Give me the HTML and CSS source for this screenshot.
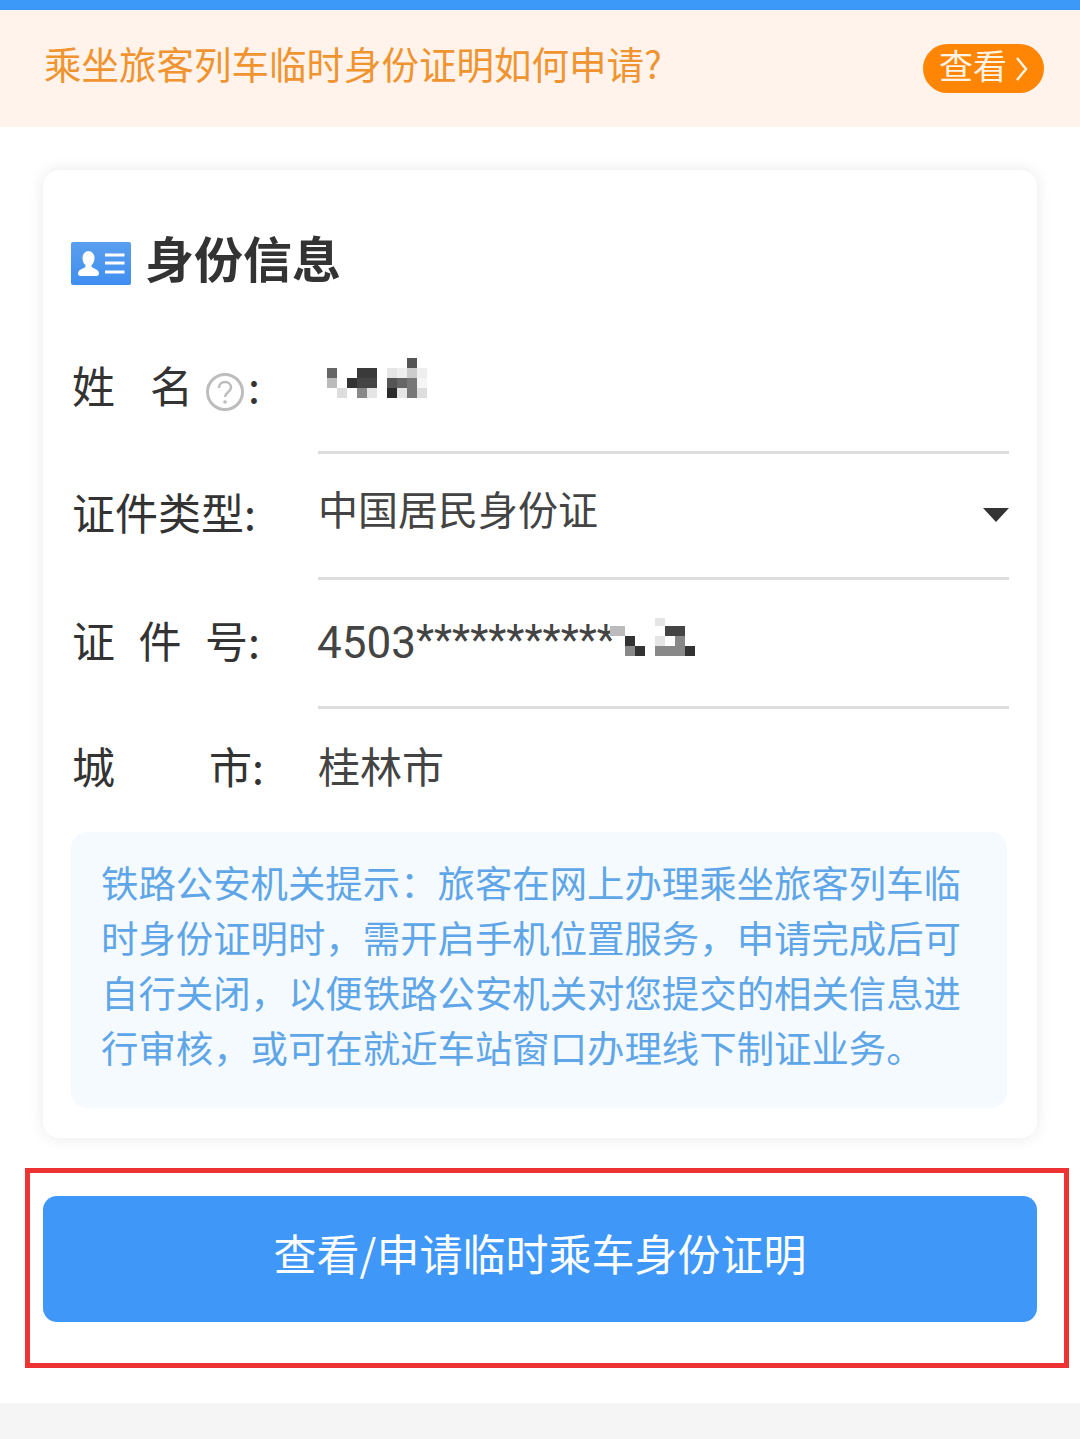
FILE: index.html
```html
<!DOCTYPE html>
<html lang="zh-CN">
<head>
    <meta charset="UTF-8">
    <meta name="viewport" content="width=device-width, initial-scale=1.0">
    <title>身份信息</title>
    <link rel="stylesheet" href="styles.css">
</head>
<body>
    <div class="top-bar"></div>

    <!-- 顶部提示 -->
    <div class="notice">
        <span class="notice-text">乘坐旅客列车临时身份证明如何申请?</span>
        <span class="notice-btn">查看
            <svg class="notice-arrow" viewBox="0 0 14 26"><path d="M2 2l9 11-9 11"/></svg>
        </span>
    </div>

    <!-- 身份信息卡片 -->
    <div class="card">
        <div class="card-title">
            <svg class="id-icon" viewBox="0 0 60 43">
                <defs>
                    <linearGradient id="idFill" x1="0" y1="0" x2="0" y2="1">
                        <stop offset="0" stop-color="#5a9fee"/>
                        <stop offset="1" stop-color="#3f8ef0"/>
                    </linearGradient>
                </defs>
                <rect width="60" height="43" rx="2" fill="url(#idFill)"/>
                <path d="M17 9c4 0 6.500 3 6.500 7 0 3-1.200 5.500-2.800 7-.6 1.500 0 2.500 2 3.300 3 1.200 5.300 2.500 5.300 5.200 0 1.500-1 2.500-2.500 2.500h-16c-1.500 0-2.500-1-2.500-2.500 0-2.700 2.300-4 5.300-5.200 2-.8 2.600-1.800 2-3.300-1.600-1.500-2.800-4-2.800-7 0-4 2.500-7 6.500-7z" fill="#fff"/>
                <path d="M34 11.500h19.500v3H34zM34 19.500h19.500v3H34zM34 28.500h19.500v3H34z" fill="#fff"/>
            </svg>
            <span>身份信息</span>
        </div>

        <div class="row row-name">
            <div class="label">
                <span>姓</span><span class="gap-name">名</span>
                <svg class="help-icon" viewBox="0 0 40 40">
                    <circle cx="20" cy="20" r="17.500" fill="none" stroke="#bdbdbd" stroke-width="3"/>
                    <path d="M14 16c0-3.500 2.500-6 6-6s6 2.400 6 5.500c0 4.500-6 5-6 9.500" fill="none" stroke="#bdbdbd" stroke-width="2.500"/>
                    <circle cx="20" cy="30" r="1.800" fill="#bdbdbd"/>
                </svg>
                <span>:</span>
            </div>
            <div class="value">
                <svg class="mosaic mosaic-name" viewBox="0 0 100 40" shape-rendering="crispEdges">
                    <rect x="0" y="10" width="10" height="10" fill="#666"/>
                    <rect x="0" y="20" width="10" height="10" fill="#bbb"/>
                    <rect x="10" y="30" width="10" height="10" fill="#ddd"/>
                    <rect x="20" y="20" width="10" height="10" fill="#333"/>
                    <rect x="30" y="10" width="20" height="10" fill="#3a3a3a"/>
                    <rect x="30" y="20" width="20" height="10" fill="#444"/>
                    <rect x="30" y="30" width="10" height="10" fill="#888"/>
                    <rect x="40" y="30" width="10" height="10" fill="#e5e5e5"/>
                    <rect x="60" y="10" width="10" height="10" fill="#e5e5e5"/>
                    <rect x="60" y="20" width="10" height="10" fill="#555"/>
                    <rect x="60" y="30" width="10" height="10" fill="#2a2a2a"/>
                    <rect x="70" y="10" width="10" height="10" fill="#eee"/>
                    <rect x="70" y="20" width="10" height="10" fill="#666"/>
                    <rect x="70" y="30" width="10" height="10" fill="#e5e5e5"/>
                    <rect x="80" y="0" width="10" height="10" fill="#555"/>
                    <rect x="80" y="10" width="10" height="10" fill="#ccc"/>
                    <rect x="80" y="20" width="10" height="20" fill="#777"/>
                    <rect x="90" y="10" width="10" height="10" fill="#eee"/>
                    <rect x="90" y="20" width="10" height="10" fill="#f5f5f5"/>
                    <rect x="90" y="30" width="10" height="10" fill="#ddd"/>
                </svg>
            </div>
        </div>

        <div class="row row-type">
            <div class="label">证件类型:</div>
            <div class="value value-select">
                <span>中国居民身份证</span>
                <span class="caret"></span>
            </div>
        </div>

        <div class="row row-number">
            <div class="label">
                <span>证</span><span class="gap-number">件</span><span class="gap-number">号</span><span>:</span>
            </div>
            <div class="value value-number">
                <span class="digits">4503</span><span class="stars">***********</span>
                <svg class="mosaic mosaic-number" viewBox="0 0 85 38" shape-rendering="crispEdges">
                    <rect x="0" y="8" width="15" height="10" fill="#bbb"/>
                    <rect x="15" y="18" width="10" height="10" fill="#333"/>
                    <rect x="15" y="28" width="10" height="10" fill="#888"/>
                    <rect x="25" y="28" width="10" height="10" fill="#333"/>
                    <rect x="45" y="0" width="10" height="8" fill="#e5e5e5"/>
                    <rect x="45" y="18" width="10" height="10" fill="#e5e5e5"/>
                    <rect x="45" y="28" width="30" height="10" fill="#888"/>
                    <rect x="55" y="8" width="20" height="10" fill="#444"/>
                    <rect x="65" y="18" width="10" height="10" fill="#888"/>
                    <rect x="75" y="28" width="10" height="10" fill="#333"/>
                </svg>
            </div>
        </div>

        <div class="row row-city">
            <div class="label">
                <span>城</span><span class="gap-city">市</span><span>:</span>
            </div>
            <div class="value">桂林市</div>
        </div>

        <div class="tip">铁路公安机关提示：旅客在网上办理乘坐旅客列车临时身份证明时，需开启手机位置服务，申请完成后可自行关闭，以便铁路公安机关对您提交的相关信息进行审核，或可在就近车站窗口办理线下制证业务。</div>
    </div>

    <!-- 红框标注的按钮 -->
    <div class="mark-box">
        <button type="button" class="main-btn">查看/申请临时乘车身份证明</button>
    </div>

    <div class="footer"></div>
</body>
</html>
```

FILE: styles.css
```css
* {
    box-sizing: border-box;
}

html, body {
    height: 100%;
}

body {
    margin: 0;
    display: flex;
    flex-direction: column;
    background-color: #fff;
    color: #333;
    font-family: "Noto Sans CJK SC", "Noto Sans", sans-serif;
    overflow: hidden;
}

.top-bar {
    height: 10px;
    background-color: #3d99f8;
}

/* 顶部提示 */
.notice {
    height: 117px;
    padding: 0 36px 12px 44px;
    display: flex;
    justify-content: space-between;
    align-items: center;
    background-color: #fff3ec;
}

.notice-text {
    font-size: 37.500px;
    line-height: 50px;
    color: #f09430;
}

.notice-btn {
    width: 121px;
    height: 49px;
    padding: 0 0 8px 16px;
    display: flex;
    align-items: center;
    gap: 8px;
    border-radius: 25px;
    background-color: #ff8505;
    color: #fff3e4;
    font-size: 34px;
    line-height: 41px;
    margin-top: 12px;
}

.notice-arrow {
    width: 14px;
    height: 26px;
    margin-top: 8px;
    fill: none;
    stroke: #fff3e4;
    stroke-width: 2.500;
}

/* 卡片 */
.card {
    margin: 43px 43px 0;
    height: 968px;
    padding: 0 28px 0 30px;
    display: flex;
    flex-direction: column;
    border-radius: 16px;
    background-color: #fff;
    box-shadow: 0 0 16px rgba(0, 0, 0, 0.09);
}

.card-title {
    height: 60px;
    margin-top: 56px;
    margin-left: -2px;
    display: flex;
    align-items: center;
    gap: 14px;
    font-size: 49px;
    font-weight: 700;
    color: #333;
}

.id-icon {
    width: 60px;
    height: 43px;
    margin-top: 14px;
}

.row {
    display: flex;
    align-items: center;
    font-size: 42px;
}

.row-name {
    height: 122px;
    margin-top: 46px;
}

.row-type {
    height: 126px;
}

.row-number {
    height: 129px;
}

.row-city {
    height: 122px;
}

.label {
    width: 245px;
    margin-left: -1px;
    margin-right: 1px;
    padding-bottom: 12px;
    display: flex;
    align-items: center;
    flex-shrink: 0;
    line-height: 60px;
    color: #333;
    font-size: 43px;
}

.row-name .label {
    padding-bottom: 18px;
}

.gap-name {
    margin-left: 35px;
}

.gap-number {
    margin-left: 23.500px;
}

.gap-city {
    margin-left: 94px;
}

.help-icon {
    width: 40px;
    height: 40px;
    margin: 15px 3px 0 12px;
}

.value {
    flex: 1;
    height: 100%;
    padding-bottom: 12px;
    display: flex;
    align-items: center;
    color: #444;
    line-height: 60px;
}

.row-name .value,
.row-type .value,
.row-number .value {
    border-bottom: 3px solid #ddd;
}

.row-city .label,
.row-city .value {
    padding-bottom: 10px;
}

.value-select {
    justify-content: space-between;
    font-size: 40px;
    padding-bottom: 16px;
}

.caret {
    width: 0;
    height: 0;
    margin-top: 14px;
    border-left: 13px solid transparent;
    border-right: 13px solid transparent;
    border-top: 14px solid #333;
}

.digits {
    font-family: "Roboto", sans-serif;
    font-size: 44px;
    margin: 12px 0 0 -1px;
}

.stars {
    font-family: "Roboto", sans-serif;
    font-size: 42px;
    margin-top: 6px;
    white-space: nowrap;
}

.mosaic {
    display: block;
    flex-shrink: 0;
}

.mosaic-name {
    width: 100px;
    height: 40px;
    margin: -16px 0 0 9px;
}

.mosaic-number {
    width: 85px;
    height: 38px;
    margin: 0 0 0 -5px;
}

/* 提示文字 */
.tip {
    height: 276px;
    margin-top: 1px;
    margin-left: -2px;
    margin-right: 2px;
    padding: 23px 46px 0 30px;
    border-radius: 16px;
    background-color: #f5faff;
    color: #5fa6e8;
    font-size: 37.400px;
    line-height: 55px;
}

/* 红框 */
.mark-box {
    margin: 30px 11px 0 25px;
    height: 200px;
    padding: 23px 27px 0 13px;
    border: 5px solid #ee3333;
}

.main-btn {
    display: block;
    width: 100%;
    height: 126px;
    padding: 0 0 14px;
    border: none;
    border-radius: 14px;
    background-color: #3f98f8;
    color: #fff;
    font-family: inherit;
    font-size: 43px;
}

.footer {
    flex: 1;
    margin-top: 35px;
    background-color: #f5f5f5;
}
```
